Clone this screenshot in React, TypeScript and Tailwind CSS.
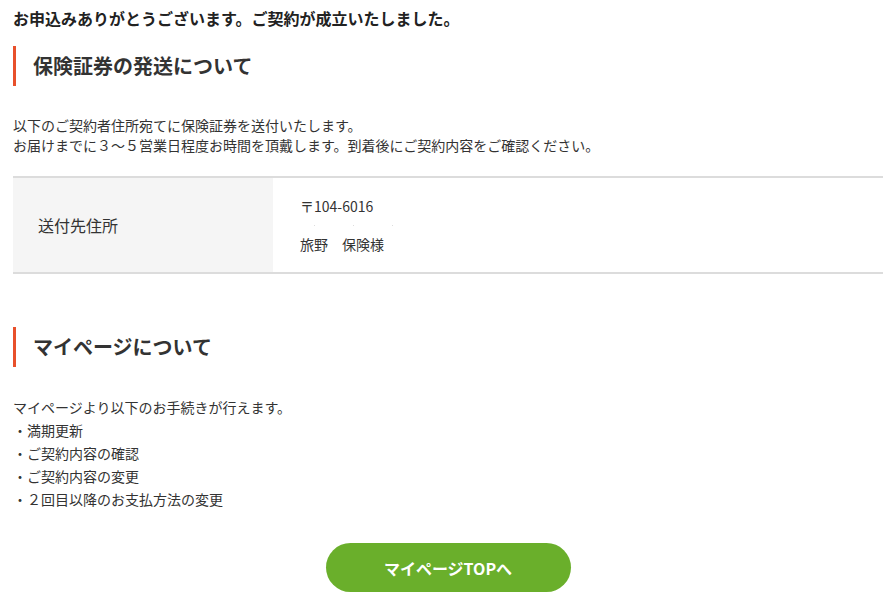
import React from 'react';

const items = [
    '・満期更新',
    '・ご契約内容の確認',
    '・ご契約内容の変更',
    '・２回目以降のお支払方法の変更'
];

function SectionHeading({ children }: { children: React.ReactNode }) {
    return (
        <h2 className="flex h-[40px] items-center border-l-[3px] border-[#e8502b] pl-[17px] text-[20px] font-bold text-[#333]">
            {children}
        </h2>
    );
}

export default function App() {
    return (
        <div
            className="min-h-[604px] w-[893px] bg-white pl-[13px] pr-[10px] text-[#333]"
            style={{ fontFamily: '"Noto Sans CJK JP", "Noto Sans", sans-serif' }}
        >
            {/* Completion message */}
            <p className="pt-[7px] text-[16px] font-bold leading-[22px] text-[#222]">
                お申込みありがとうございます。ご契約が成立いたしました。
            </p>

            {/* Policy shipping */}
            <div className="mt-[17px]">
                <SectionHeading>保険証券の発送について</SectionHeading>
            </div>
            <div className="mt-[29px] text-[14px] leading-[20px]">
                <p>以下のご契約者住所宛てに保険証券を送付いたします。</p>
                <p>お届けまでに３～５営業日程度お時間を頂戴します。到着後にご契約内容をご確認ください。</p>
            </div>

            <div className="mt-[21px] flex h-[98px] border-y-2 border-[#dcdcdc]">
                <div className="flex w-[260px] items-center bg-[#f5f5f5] pl-[25px] text-[16px]">
                    送付先住所
                </div>
                <div className="flex flex-1 flex-col justify-center pl-[27px] text-[14px]">
                    <p className="leading-[20px]">〒104-6016</p>
                    <div className="flex h-[18px] items-center gap-[38px] pl-[14px]">
                        <span className="h-px w-px bg-[#ddd]" />
                        <span className="h-px w-px bg-[#ddd]" />
                        <span className="h-px w-px bg-[#ddd]" />
                    </div>
                    <p className="leading-[20px]">旅野　保険様</p>
                </div>
            </div>

            {/* My page */}
            <div className="mt-[53px]">
                <SectionHeading>マイページについて</SectionHeading>
            </div>
            <div className="mt-[29px] text-[14px] leading-[23px]">
                <p>マイページより以下のお手続きが行えます。</p>
                {items.map((item, index) => (
                    <p key={index}>{item}</p>
                ))}
            </div>

            <div className="mt-[32px] flex justify-center pb-[12px]">
                <button className="h-[49px] w-[245px] rounded-full bg-[#6aaf2b] text-[16px] font-bold text-white">
                    マイページTOPへ
                </button>
            </div>
        </div>
    );
}
